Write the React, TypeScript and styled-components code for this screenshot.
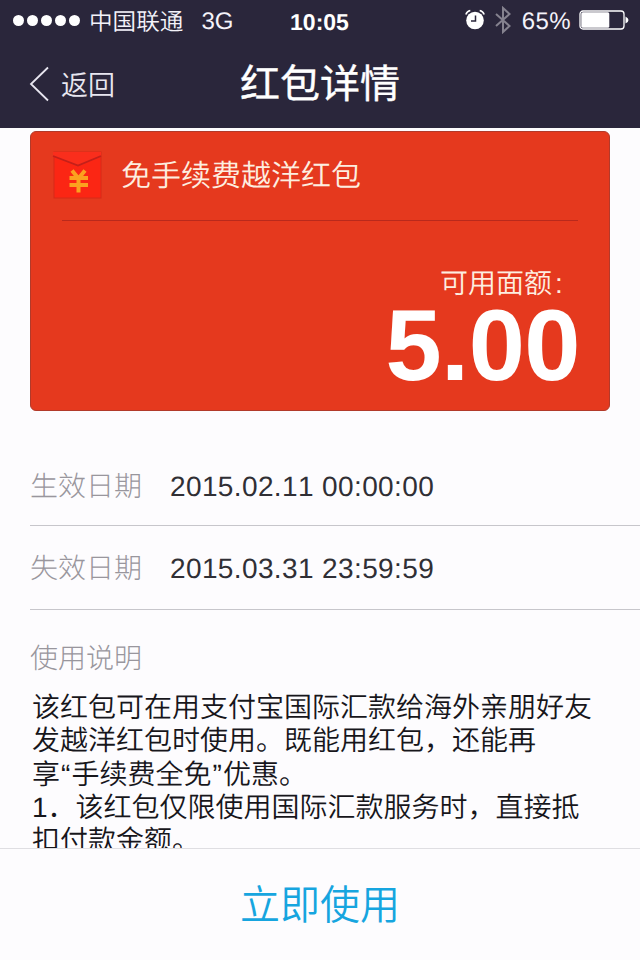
import React from "react";
import styled, { createGlobalStyle } from "styled-components";

const GlobalStyle = createGlobalStyle`
  * { box-sizing: border-box; }
  body {
    margin: 0;
    background: #fdfcfe;
    font-family: "Liberation Sans", "Noto Sans CJK SC", sans-serif;
    font-weight: 300;
    font-kerning: none;
    text-rendering: geometricPrecision;
  }
`;

const Screen = styled.div`
  display: flex;
  flex-direction: column;
  width: 640px;
  height: 960px;
  overflow: hidden;
`;

const Header = styled.header`
  flex: none;
  height: 128px;
  background: #2a263b;
  color: #f4f3fa;
`;

const StatusBar = styled.div`
  display: grid;
  grid-template-columns: 1fr 60px 1fr;
  align-items: center;
  align-content: center;
  height: 40px;
  padding: 0 11px 0 13px;
  font-size: 24px;
  line-height: 32px;
  white-space: nowrap;
`;

const StatusGroup = styled.div<{ $end?: boolean }>`
  display: flex;
  align-items: center;
  justify-content: ${(p) => (p.$end ? "flex-end" : "flex-start")};
`;

const Signal = styled.div`
  display: flex;
  gap: 3px;
  margin: 1px 9px 0 0;
`;

const Dot = styled.i`
  width: 11px;
  height: 11px;
  border-radius: 50%;
  background: #fff;
`;

const Carrier = styled.span`
  padding-top: 5px;
  font-size: 23.6px;
  font-weight: 350;
`;

const Network = styled.span`
  padding-top: 3px;
  margin-left: 18px;
`;

const Clock = styled.span`
  padding-top: 3px;
  margin-left: -3px;
  font-size: 23px;
  font-weight: 700;
  color: #fff;
  text-align: center;
`;

const Percent = styled.span`
  padding-top: 3px;
  margin: 0 8px 0 11px;
  letter-spacing: 0.4px;
`;

const NavBar = styled.div`
  display: grid;
  grid-template-columns: 200px 240px 200px;
  align-items: center;
  height: 88px;
`;

const BackButton = styled.button`
  display: flex;
  align-items: center;
  gap: 12px;
  padding: 0 0 0 29px;
  border: 0;
  background: none;
  color: #e8e6f0;
  font: inherit;
  font-size: 27px;
  font-weight: 350;
  line-height: 40px;
`;

const BackText = styled.span`
  padding-top: 4px;
`;

const Title = styled.h1`
  margin: 1px 0 0;
  color: #fff;
  font-size: 40px;
  font-weight: 400;
  line-height: 60px;
  text-align: center;
  -webkit-text-stroke: 0.4px #fff;
`;

const Content = styled.main`
  flex: 1;
  min-height: 0;
  overflow: hidden;
  padding: 3px 0 0 30px;
`;

const Card = styled.section`
  width: 580px;
  height: 280px;
  padding: 0 31px;
  border: 1px solid #b23a2a;
  border-radius: 6px;
  background: #e5391e;
  color: #fdeee0;
`;

const CardHeader = styled.div`
  display: flex;
  align-items: center;
  gap: 19px;
  height: 88px;
  margin-left: -10px;
  font-size: 30px;
  font-weight: 350;
  line-height: 44px;
`;

const CardTitle = styled.span`
  padding-top: 2px;
`;

const CardRule = styled.div`
  height: 1px;
  background: #b9291c;
`;

const FaceLabel = styled.div`
  display: flex;
  gap: 3px;
  margin-top: 45px;
  padding-left: 378px;
  font-size: 28px;
  font-weight: 350;
  line-height: 36px;
  white-space: nowrap;
`;

const Amount = styled.div`
  margin: -6px -2px 0 0;
  color: #fff;
  font-size: 101px;
  font-weight: 700;
  letter-spacing: -0.5px;
  line-height: 100px;
  text-align: right;
`;

const DateRow = styled.div<{ $first?: boolean }>`
  display: flex;
  align-items: center;
  height: ${(p) => (p.$first ? 80 : 84)}px;
  margin-top: ${(p) => (p.$first ? 35 : 0)}px;
  border-bottom: 1px solid #c7c6cb;
  font-size: 28px;
`;

const Label = styled.span`
  width: 140px;
  padding-top: 3px;
  color: #99969d;
  font-size: 28px;
  line-height: 42px;
`;

const DateValue = styled.span`
  padding-top: 2px;
  color: #302f35;
  letter-spacing: 0.38px;
`;

const NotesTitle = styled.h2`
  margin: 28px 0 0;
  color: #99969d;
  font-size: 28px;
  font-weight: 300;
  line-height: 42px;
`;

const Notes = styled.div`
  margin: 11px 0 0 2px;
  color: #17161b;
  font-size: 28px;
  font-weight: 350;
  line-height: 33.3px;
  white-space: nowrap;
`;

const Line = styled.div``;

const Quote = styled.span`
  display: inline-block;
  width: 11.5px;
  text-align: center;
`;

const Footer = styled.footer`
  flex: none;
  height: 112px;
  border-top: 1px solid #dfdee2;
`;

const UseButton = styled.button`
  display: block;
  width: 100%;
  height: 110px;
  padding: 0 0 5px;
  border: 0;
  background: none;
  color: #16a5df;
  font: inherit;
  font-size: 40px;
  font-weight: 350;
`;

const AlarmIcon = () => (
  <svg width="22" height="22" viewBox="0 0 22 22">
    <circle cx="10" cy="11.5" r="8.8" fill="#fff" />
    <path d="M0.8 5.5Q2 2.2 5.3 1.5M19.2 5.5Q18 2.2 14.7 1.5" fill="none" stroke="#fff" strokeWidth="1.5" />
    <path d="M10.5 6.5V12H6" fill="none" stroke="#2a263b" strokeWidth="1.5" />
  </svg>
);

const BluetoothSvg = styled.svg`
  margin-left: 8px;
`;

const BluetoothIcon = () => (
  <BluetoothSvg width="16" height="28" viewBox="0 0 16 28">
    <path d="M1 8L14.5 20L8 26V2L14.5 8L1 20" fill="none" stroke="#85828f" strokeWidth="2" />
  </BluetoothSvg>
);

const BatteryIcon = () => (
  <svg width="50" height="20" viewBox="0 0 50 20">
    <rect x="1" y="1" width="44" height="18" rx="3" fill="none" stroke="#fff" strokeWidth="1.3" />
    <rect x="2.3" y="2.3" width="28" height="15.4" rx="1.5" fill="#fff" />
    <path d="M46.5 6.5Q49.5 8 49.5 10T46.5 13.5Z" fill="#fff" />
  </svg>
);

const BackIcon = () => (
  <svg width="20" height="36" viewBox="0 0 20 36">
    <path d="M19 1.5L2 18L19 34.5" fill="none" stroke="#e8e6f0" strokeWidth="1.8" />
  </svg>
);

const EnvelopeIcon = () => (
  <svg width="50" height="50" viewBox="0 0 50 50">
    <rect x="2" y="1" width="47" height="46" fill="#fb2614" stroke="#d62a19" />
    <path d="M1 5V1H49V5L26 14.5Z" fill="#fa2e1c" />
    <path d="M1 5L26 14.5L49 5" fill="none" stroke="#c4201a" strokeWidth="1.8" />
    <path
      d="M20 19.5L26.5 27.5L33 19.5M17.5 27H36M17.5 34H36M26.5 27V41.5"
      fill="none"
      stroke="#fba21f"
      strokeWidth="4"
    />
  </svg>
);

const dates = [
  { label: "生效日期", value: "2015.02.11 00:00:00" },
  { label: "失效日期", value: "2015.03.31 23:59:59" },
];

export default function App() {
  return (
    <Screen lang="zh-CN">
      <GlobalStyle />
      <Header>
        <StatusBar>
          <StatusGroup>
            <Signal>
              {[0, 1, 2, 3, 4].map((i) => (
                <Dot key={i} />
              ))}
            </Signal>
            <Carrier>中国联通</Carrier>
            <Network>3G</Network>
          </StatusGroup>
          <Clock>10:05</Clock>
          <StatusGroup $end>
            <AlarmIcon />
            <BluetoothIcon />
            <Percent>65%</Percent>
            <BatteryIcon />
          </StatusGroup>
        </StatusBar>
        <NavBar>
          <BackButton>
            <BackIcon />
            <BackText>返回</BackText>
          </BackButton>
          <Title>红包详情</Title>
        </NavBar>
      </Header>
      <Content>
        <Card>
          <CardHeader>
            <EnvelopeIcon />
            <CardTitle>免手续费越洋红包</CardTitle>
          </CardHeader>
          <CardRule />
          <FaceLabel>
            可用面额<span>:</span>
          </FaceLabel>
          <Amount>5.00</Amount>
        </Card>
        {dates.map((d, i) => (
          <DateRow key={d.label} $first={i === 0}>
            <Label>{d.label}</Label>
            <DateValue>{d.value}</DateValue>
          </DateRow>
        ))}
        <NotesTitle>使用说明</NotesTitle>
        <Notes>
          <Line>该红包可在用支付宝国际汇款给海外亲朋好友</Line>
          <Line>发越洋红包时使用。既能用红包，还能再</Line>
          <Line>
            享<Quote>“</Quote>手续费全免<Quote>”</Quote>优惠。
          </Line>
          <Line>1．该红包仅限使用国际汇款服务时，直接抵</Line>
          <Line>扣付款金额。</Line>
        </Notes>
      </Content>
      <Footer>
        <UseButton>立即使用</UseButton>
      </Footer>
    </Screen>
  );
}
